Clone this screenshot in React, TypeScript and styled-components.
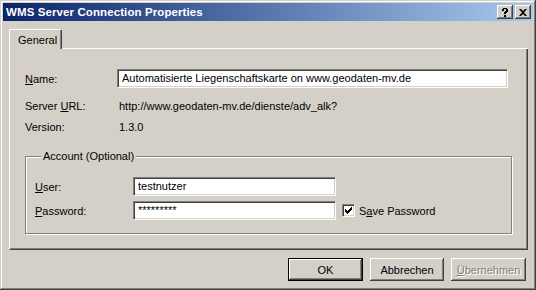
import styled, { createGlobalStyle, css } from 'styled-components';

const GlobalStyle = createGlobalStyle`
    html, body {
        margin: 0;
        padding: 0;
        background: #d4d0c8;
    }
    * {
        box-sizing: border-box;
    }
`;

const face = '#d4d0c8';

const raised = css`
    box-shadow:
        inset -1px -1px #404040,
        inset 1px 1px #ffffff,
        inset -2px -2px #808080,
        inset 2px 2px ${face};
`;

const sunken = css`
    border: 1px solid;
    border-color: #808080 #ffffff #ffffff #808080;
    box-shadow: inset 1px 1px #404040, inset -1px -1px ${face};
`;

const Window = styled.div`
    width: 536px;
    height: 290px;
    padding: 3px;
    display: flex;
    flex-direction: column;
    background: ${face};
    font-family: "Liberation Sans", Arial, sans-serif;
    font-size: 11px;
    color: #000;
    box-shadow:
        inset -1px -1px #404040,
        inset 1px 1px ${face},
        inset -2px -2px #808080,
        inset 2px 2px #ffffff;
`;

const TitleBar = styled.div`
    height: 18px;
    display: flex;
    align-items: center;
    padding-left: 3px;
    background: linear-gradient(to right, #0a246a, #a6caf0);
`;

const Title = styled.span`
    flex: 1;
    color: #fff;
    font-weight: bold;
    font-size: 11.5px;
    letter-spacing: 0.1px;
`;

const CaptionButton = styled.div`
    width: 16px;
    height: 14px;
    margin-right: 2px;
    display: flex;
    align-items: center;
    justify-content: center;
    background: ${face};
    ${raised};
`;

const Body = styled.div`
    flex: 1;
    display: flex;
    flex-direction: column;
    padding: 8px 5px 0 6px;
`;

const TabStrip = styled.div`
    display: flex;
    align-items: flex-end;
    height: 20px;
`;

const Tab = styled.div`
    width: 53px;
    height: 20px;
    padding: 4px 0 0 8px;
    border-left: 1px solid #fff;
    border-top: 1px solid #fff;
    border-right: 1px solid #404040;
    border-top-left-radius: 2px;
    border-top-right-radius: 2px;
    box-shadow: inset -1px 0 #808080;
`;

const TabFill = styled.div`
    flex: 1;
    border-bottom: 1px solid #fff;
`;

const Panel = styled.div`
    height: 201px;
    padding: 20px 0 0 15px;
    border-left: 1px solid #fff;
    border-right: 1px solid #404040;
    border-bottom: 1px solid #404040;
    box-shadow: inset -1px -1px #808080;
`;

const Row = styled.div<{ $h?: number; $top?: number }>`
    display: flex;
    align-items: center;
    height: ${p => p.$h ?? 19}px;
    margin-top: ${p => p.$top ?? 0}px;
`;

const Label = styled.span<{ $w: number }>`
    width: ${p => p.$w}px;
    flex-shrink: 0;
`;

const Value = styled.span`
    padding-left: 2px;
`;

const Field = styled.div<{ $w: number }>`
    width: ${p => p.$w}px;
    height: 19px;
    padding: 2px 4px 0 4px;
    background: #fff;
    white-space: nowrap;
    overflow: hidden;
    ${sunken};
`;

const Group = styled.fieldset`
    width: 487px;
    height: 84px;
    margin: 13px 0 0 0;
    padding: 14px 0 0 9px;
    border: 1px solid #808080;
    box-shadow: inset 1px 1px #fff, 1px 1px 0 #fff;
`;

const Legend = styled.legend`
    margin-left: 6px;
    padding: 0 2px;
    background: ${face};
    line-height: 13px;
`;

const Check = styled.div`
    width: 13px;
    height: 13px;
    margin: 0 4px 0 6px;
    background: #fff;
    display: flex;
    align-items: center;
    justify-content: center;
    ${sunken};
`;

const ButtonRow = styled.div`
    display: flex;
    justify-content: flex-end;
    gap: 7px;
    margin-top: 8px;
    padding-right: 2px;
`;

const Button = styled.div<{ $default?: boolean; $disabled?: boolean; $w: number }>`
    width: ${p => p.$w}px;
    height: 23px;
    display: flex;
    align-items: center;
    justify-content: center;
    background: ${face};
    ${raised};
    ${p => p.$default && css`
        border: 1px solid #000;
    `}
    ${p => p.$disabled && css`
        color: #808080;
        text-shadow: 1px 1px 0 #fff;
    `}
`;

export default function App() {
    return (
        <>
            <GlobalStyle />
            <Window>
                <TitleBar>
                    <Title>WMS Server Connection Properties</Title>
                    <CaptionButton>
                        <svg width="8" height="9" viewBox="0 0 8 9">
                            <path d="M1 1h1V0h4v1h1v3H6v1H5v1H3V4h1V3h1V1H3v2H1z" fill="#000" />
                            <rect x="3" y="7" width="2" height="2" fill="#000" />
                        </svg>
                    </CaptionButton>
                    <CaptionButton>
                        <svg width="8" height="7" viewBox="0 0 8 7">
                            <path d="M0 0h2l2 2 2-2h2L5 3.5 8 7H6L4 5 2 7H0l3-3.5z" fill="#000" />
                        </svg>
                    </CaptionButton>
                </TitleBar>
                <Body>
                    <TabStrip>
                        <Tab>General</Tab>
                        <TabFill />
                    </TabStrip>
                    <Panel>
                        <Row>
                            <Label $w={92}><u>N</u>ame:</Label>
                            <Field $w={391}>Automatisierte Liegenschaftskarte on www.geodaten-mv.de</Field>
                        </Row>
                        <Row $h={21} $top={7}>
                            <Label $w={92}>Server <u>U</u>RL:</Label>
                            <Value>http://www.geodaten-mv.de/dienste/adv_alk?</Value>
                        </Row>
                        <Row $h={21}>
                            <Label $w={92}>Version:</Label>
                            <Value>1.3.0</Value>
                        </Row>
                        <Group>
                            <Legend>Account (Optional)</Legend>
                            <Row>
                                <Label $w={98}><u>U</u>ser:</Label>
                                <Field $w={203}>testnutzer</Field>
                            </Row>
                            <Row $top={5}>
                                <Label $w={98}><u>P</u>assword:</Label>
                                <Field $w={203}>*********</Field>
                                <Check>
                                    <svg width="7" height="7" viewBox="0 0 7 7">
                                        <path d="M0 2h1v1h1v1h1V3h1V2h1V1h1V0h1v3H6v1H5v1H4v1H3v1H2V6H1V5H0z" fill="#000" />
                                    </svg>
                                </Check>
                                <span>S<u>a</u>ve Password</span>
                            </Row>
                        </Group>
                    </Panel>
                    <ButtonRow>
                        <Button $default $w={75}>OK</Button>
                        <Button $w={74}>Abbrechen</Button>
                        <Button $disabled $w={75}><span><u>Ü</u>bernehmen</span></Button>
                    </ButtonRow>
                </Body>
            </Window>
        </>
    );
}
